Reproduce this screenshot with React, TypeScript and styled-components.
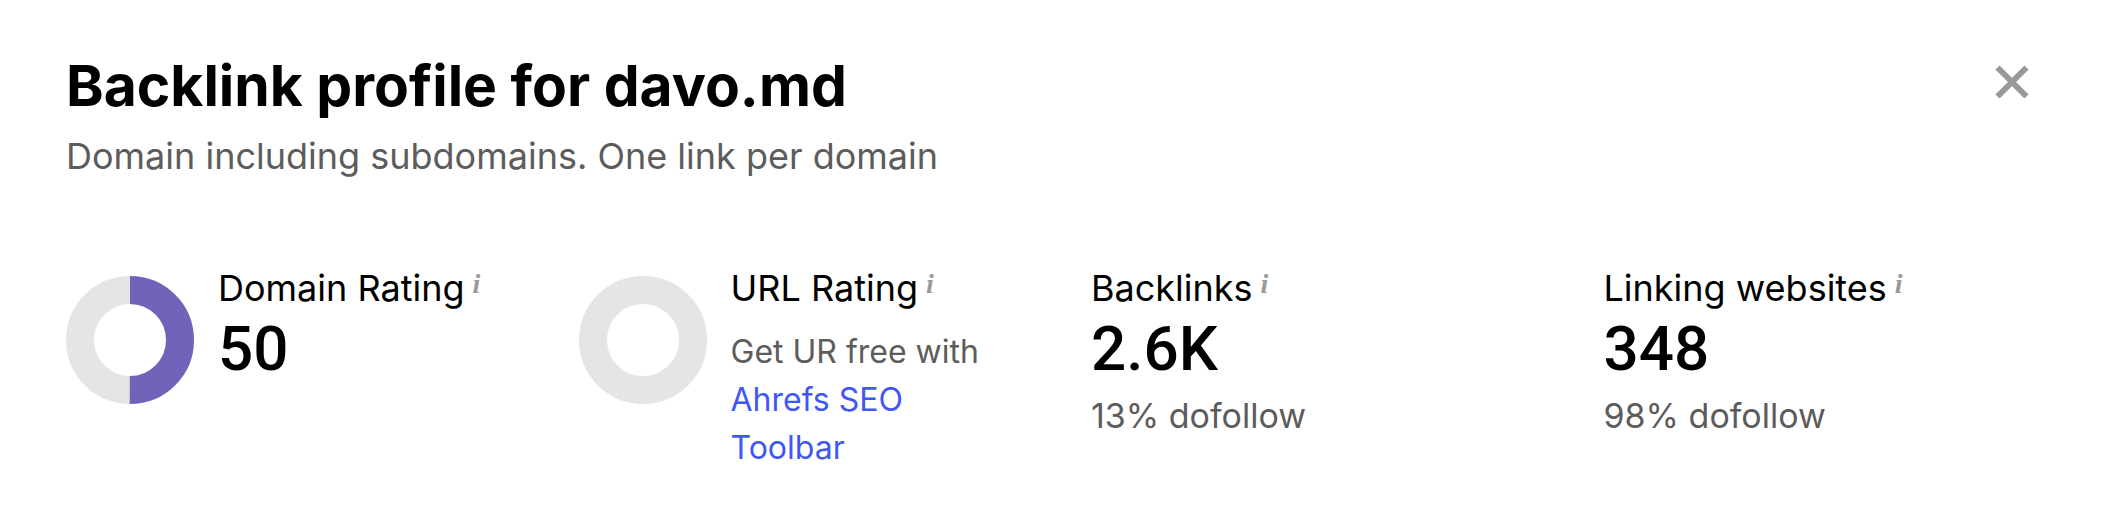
import React from 'react';
import styled, { createGlobalStyle } from 'styled-components';

const GlobalStyle = createGlobalStyle`
  * { box-sizing: border-box; }
  body { margin: 0; background: #fff; color: #000; font-family: Inter, sans-serif; }
  h1, h2, p { margin: 0; }
`;

const Panel = styled.main`
  padding: 52px 66px 40px;
`;

const Header = styled.header`
  display: flex;
  justify-content: space-between;
  align-items: flex-start;
`;

const Title = styled.h1`
  font-size: 57px;
  line-height: 68px;
  font-weight: 700;
`;

const Subtitle = styled.p`
  margin-top: 12px;
  font-size: 36px;
  line-height: 48px;
  color: #5c5c5c;
`;

const CloseButton = styled.button`
  display: flex;
  margin-top: 6px;
  padding: 6px;
  border: 0;
  background: none;
  color: #999;
  cursor: pointer;
`;

const Metrics = styled.div`
  display: grid;
  grid-template-columns: repeat(4, minmax(0, 1fr));
  gap: 80px;
  margin-top: 84px;
`;

const Metric = styled.section`
  display: flex;
  align-items: flex-start;
  gap: 24px;
`;

const Chart = styled.svg`
  flex: none;
  margin-top: 12px;
`;

const Details = styled.div`
  min-width: 0;
`;

const LabelRow = styled.div`
  display: flex;
  align-items: flex-start;
  gap: 8px;
`;

const Label = styled.h2`
  font-size: 36px;
  line-height: 48px;
  font-weight: 400;
  white-space: nowrap;
`;

const InfoButton = styled.button`
  padding: 0;
  border: 0;
  background: none;
  color: #999;
  font: italic 700 28px/40px 'Liberation Serif', serif;
  cursor: help;
`;

const Value = styled.p`
  font-family: Roboto, sans-serif;
  font-size: 62px;
  line-height: 74px;
  font-weight: 500;
`;

const Share = styled.p`
  margin-top: 6px;
  font-size: 34px;
  line-height: 48px;
  color: #5c5c5c;
`;

const Hint = styled.p`
  margin-top: 16px;
  font-size: 32px;
  line-height: 48px;
  color: #5c5c5c;
`;

const HintLink = styled.a`
  color: #3f57f5;
  text-decoration: none;
`;

function Donut({ percent }: { percent: number }) {
  const length = 2 * Math.PI * 50;
  return (
    <Chart width="128" height="128" viewBox="0 0 128 128" fill="none" strokeWidth="28" aria-hidden="true">
      <circle cx="64" cy="64" r="50" stroke="#e5e5e5" />
      {percent > 0 && (
        <circle
          cx="64"
          cy="64"
          r="50"
          stroke="#7263ba"
          strokeDasharray={`${(length * percent) / 100} ${length}`}
          transform="rotate(-90 64 64)"
        />
      )}
    </Chart>
  );
}

function MetricLabel({ text }: { text: string }) {
  return (
    <LabelRow>
      <Label>{text}</Label>
      <InfoButton type="button" aria-label={`About ${text}`}>i</InfoButton>
    </LabelRow>
  );
}

export default function App() {
  return (
    <>
      <GlobalStyle />
      <Panel>
        <Header>
          <div>
            <Title>Backlink profile for davo.md</Title>
            <Subtitle>Domain including subdomains. One link per domain</Subtitle>
          </div>
          <CloseButton type="button" aria-label="Close">
            <svg width="36" height="36" viewBox="0 0 36 36" stroke="currentColor" strokeWidth="6">
              <path d="M3.5 3.5 32.5 32.5M32.5 3.5 3.5 32.5" />
            </svg>
          </CloseButton>
        </Header>
        <Metrics>
          <Metric>
            <Donut percent={50} />
            <Details>
              <MetricLabel text="Domain Rating" />
              <Value>50</Value>
            </Details>
          </Metric>
          <Metric>
            <Donut percent={0} />
            <Details>
              <MetricLabel text="URL Rating" />
              <Hint>
                Get UR free with <HintLink href="#toolbar">Ahrefs SEO Toolbar</HintLink>
              </Hint>
            </Details>
          </Metric>
          <Metric>
            <Details>
              <MetricLabel text="Backlinks" />
              <Value>2.6K</Value>
              <Share>13% dofollow</Share>
            </Details>
          </Metric>
          <Metric>
            <Details>
              <MetricLabel text="Linking websites" />
              <Value>348</Value>
              <Share>98% dofollow</Share>
            </Details>
          </Metric>
        </Metrics>
      </Panel>
    </>
  );
}
